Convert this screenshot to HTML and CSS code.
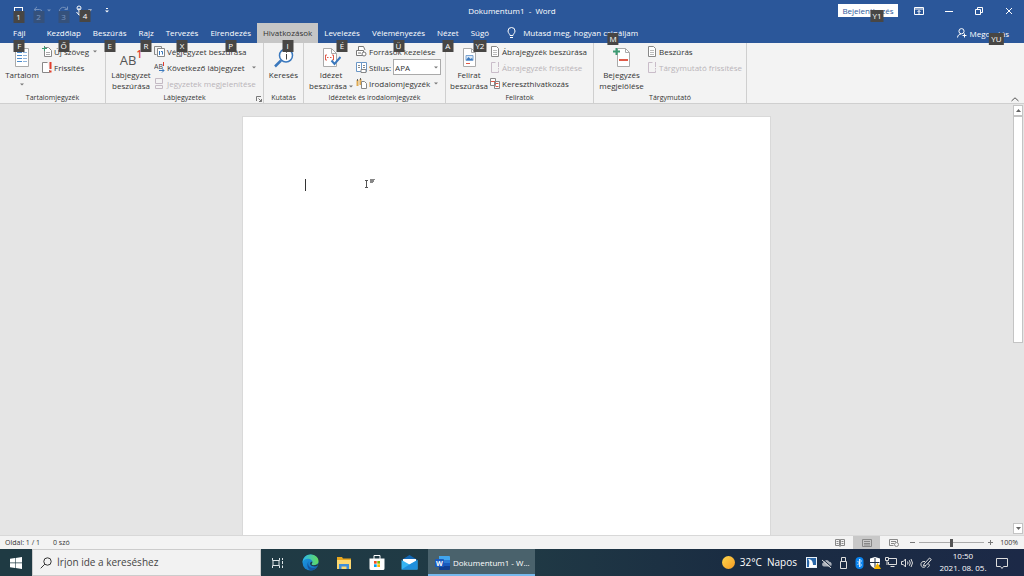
FILE: index.html
```
<!DOCTYPE html>
<html lang="hu">
    <head>
        <meta charset="utf-8">
        <title>Dokumentum1 - Word</title>
        <link rel="stylesheet" href="styles.css">
    </head>
    <body>
        <header class="titlebar">
            <div class="quick">
                <button class="quick-btn" aria-label="Mentés">
                    <svg width="11" height="10" viewBox="0 0 11 10" fill="none" stroke="#fff"><path d="M1.5 1v7.5h8V1M1 1.5h9"/></svg>
                    <span class="tip">1</span>
                </button>
                <button class="quick-btn dim" aria-label="Visszavonás">
                    <svg width="11" height="10" viewBox="0 0 11 10" fill="none" stroke="#fff"><path d="M4 .8L1.2 3.5 4 6.2M1.5 3.5h5a2.500 2.500 0 010 5"/></svg>
                    <span class="tip">2</span>
                </button>
                <svg class="caret light quick-caret dim" width="4" height="3" viewBox="0 0 4 3"><path d="M0 .5h4L2 2.500z"/></svg>
                <button class="quick-btn quick-redo dim" aria-label="Ismétlés">
                    <svg width="11" height="10" viewBox="0 0 11 10" fill="none" stroke="#fff"><path d="M9 3.500A4 4 0 109 7M9.500.5v3h-3"/></svg>
                    <span class="tip">3</span>
                </button>
                <button class="quick-btn quick-touch" aria-label="Érintőmód">
                    <svg width="11" height="12" viewBox="0 0 11 12" fill="none" stroke="#fff"><circle cx="5" cy="3" r="2"/><path d="M5 3v7M2.500 7l2.500 3 4 1V7L5 6"/></svg>
                    <span class="tip">4</span>
                </button>
                <svg class="caret light quick-caret" width="4" height="3" viewBox="0 0 4 3"><path d="M0 .5h4L2 2.500z"/></svg>
                <button class="quick-more" aria-label="Testreszabás">
                    <svg width="4" height="5" viewBox="0 0 4 5" fill="#fff"><path d="M1 0h2v1H1zM0 2.500h4L2 4.500z"/></svg>
                </button>
            </div>
            <h1 class="doc-title">Dokumentum1&nbsp; -&nbsp; Word</h1>
            <div class="window-tools">
                <button class="signin">Bejelentkezés<span class="tip">Y1</span></button>
                <button class="win-btn" aria-label="Menüszalag">
                    <svg width="10" height="8" viewBox="0 0 10 8" fill="none" stroke="#fff"><path d="M.5.5h9v7h-9zM.5 2h9M5 7V3.500M3.500 5L5 3.500 6.500 5"/></svg>
                </button>
                <button class="win-btn" aria-label="Kis méret">
                    <svg width="8" height="8" viewBox="0 0 8 8" stroke="#fff"><path d="M0 4.500h8"/></svg>
                </button>
                <button class="win-btn" aria-label="Előző méret">
                    <svg width="8" height="8" viewBox="0 0 8 8" fill="none" stroke="#fff"><path d="M.5 2.500h5v5h-5zM2.500 2V.5h5v5H6"/></svg>
                </button>
                <button class="win-btn" aria-label="Bezárás">
                    <svg width="8" height="8" viewBox="0 0 8 8" stroke="#fff"><path d="M1 1l6 6M7 1L1 7"/></svg>
                </button>
            </div>
        </header>

        <nav class="tabs">
            <button class="tab file">Fájl<span class="tip">F</span></button>
            <button class="tab">Kezdőlap<span class="tip">Ő</span></button>
            <button class="tab">Beszúrás<span class="tip">E</span></button>
            <button class="tab">Rajz<span class="tip">R</span></button>
            <button class="tab">Tervezés<span class="tip">X</span></button>
            <button class="tab">Elrendezés<span class="tip">P</span></button>
            <button class="tab active">Hivatkozások<span class="tip">I</span></button>
            <button class="tab">Levelezés<span class="tip">É</span></button>
            <button class="tab">Véleményezés<span class="tip">Ü</span></button>
            <button class="tab">Nézet<span class="tip">A</span></button>
            <button class="tab">Súgó<span class="tip">Y2</span></button>
            <button class="tell-me">
                <svg width="9" height="12" viewBox="0 0 9 12" fill="none" stroke="#fff"><path d="M3 8.500C3 7 1 6.200 1 4a3.500 3.500 0 017 0c0 2.200-2 3-2 4.500zM3 10.500h3"/></svg>
                Mutasd meg, hogyan csináljam
                <span class="tip">M</span>
            </button>
            <button class="share">
                <svg width="10" height="10" viewBox="0 0 10 10" fill="none" stroke="#fff"><circle cx="4.500" cy="3.200" r="2.600"/><path d="M.5 9.500C.8 7 2.500 6 4 6M7.500 5.500v4M5.500 7.500h4"/></svg>
                Megosztás
                <span class="tip">YU</span>
            </button>
        </nav>

        <section class="ribbon">
            <div class="group group-toc">
                <div class="group-body">
                    <button class="big">
                        <svg width="16" height="20" viewBox="0 0 16 20"><path d="M1.500.5h13v18h-13z" fill="#fff" stroke="#aaa"/><path d="M3 4.500h5M3 7.500h5M3 10.500h5M3 13.500h5" stroke="#4a8acb"/><path d="M9 4.500h4M9 7.500h4M9 10.500h4M9 13.500h4" stroke="#8fb4dc"/></svg>
                        <span>Tartalom</span>
                        <svg class="caret" width="4" height="3" viewBox="0 0 4 3"><path d="M0 .5h4L2 2.500z"/></svg>
                    </button>
                    <div class="smalls">
                        <button class="small">
                            <svg width="10" height="11" viewBox="0 0 10 11"><path d="M2.500 1.500h4l3 3v6h-7z" fill="#fff" stroke="#888"/><path d="M4 6.500h4M4 8.500h4" stroke="#aaa"/><path d="M0 2.500h5M2.500 0v5" stroke="#3c9a72"/></svg>
                            Új szöveg
                            <svg class="caret" width="4" height="3" viewBox="0 0 4 3"><path d="M0 .5h4L2 2.500z"/></svg>
                        </button>
                        <button class="small">
                            <svg width="10" height="11" viewBox="0 0 10 11"><path d="M5.500.5h-5v10h7V8" fill="#fff" stroke="#888"/><path d="M8.500 0v7M8.500 8.500v2" stroke="#e03e2d" stroke-width="2"/></svg>
                            Frissítés
                        </button>
                    </div>
                </div>
                <h2 class="group-name">Tartalomjegyzék</h2>
            </div>

            <div class="group group-notes">
                <div class="group-body">
                    <button class="big">
                        <span class="ab">AB<sup>1</sup></span>
                        <span>Lábjegyzet beszúrása</span>
                    </button>
                    <div class="smalls">
                        <button class="small">
                            <svg width="11" height="11" viewBox="0 0 11 11"><path d="M7.500 2.500v-2h-7v8h2" fill="none" stroke="#888"/><path d="M3.500 2.500h7v8h-7z" fill="#fff" stroke="#888"/><path d="M5.500 5v4M7 5.500h1.500v3" fill="none" stroke="#3a78bd"/></svg>
                            Végjegyzet beszúrása
                        </button>
                        <button class="small">
                            <svg class="ab-icon" width="11" height="11" viewBox="0 0 11 11"><text x="0" y="7">AB</text><path d="M9.500 0v4" stroke="#e03e2d"/><path d="M5 8.500h5M8 6.500l2 2-2 2" fill="none" stroke="#3a78bd"/></svg>
                            Következő lábjegyzet
                            <svg class="caret caret-gap" width="4" height="3" viewBox="0 0 4 3"><path d="M0 .5h4L2 2.500z"/></svg>
                        </button>
                        <button class="small" disabled>
                            <svg width="11" height="11" viewBox="0 0 11 11" fill="none" stroke="#c4bac4"><path d="M1.500.5h7v5h-7zM1.500 7.500h7v3h-7z"/></svg>
                            Jegyzetek megjelenítése
                        </button>
                    </div>
                </div>
                <h2 class="group-name">Lábjegyzetek</h2>
                <button class="launcher" aria-label="Lábjegyzet beállításai">
                    <svg width="6" height="6" viewBox="0 0 6 6" fill="none" stroke="#777"><path d="M.5 5V.5H5M2.500 2.500l3 3M5.500 3v2.500H3"/></svg>
                </button>
            </div>

            <div class="group group-search">
                <div class="group-body">
                    <button class="big">
                        <svg width="20" height="20" viewBox="0 0 20 20" fill="none"><circle cx="12" cy="7.500" r="6.500" fill="#fff" stroke="#3a78bd" stroke-width="1.500"/><path d="M7 12.500l-6 6" stroke="#3a78bd" stroke-width="2.500"/><path d="M12.500 6v5.500M12.500 3.500v1.200" stroke="#444"/></svg>
                        <span>Keresés</span>
                    </button>
                </div>
                <h2 class="group-name">Kutatás</h2>
            </div>

            <div class="group group-cite">
                <div class="group-body">
                    <button class="big">
                        <svg width="19" height="20" viewBox="0 0 19 20" fill="none"><path d="M1.500.5h8l5 5v13h-13z" fill="#fff" stroke="#aaa"/><path d="M9.500.5v5h5" stroke="#aaa"/><path d="M5 7H3.500v5H5M10 7h1.500v5H10M5 9.500h1.500M8 9.500h1.500" stroke="#e05a48"/><path d="M9.500 12.500l3 3.500 6-7" stroke="#3a78bd" stroke-width="2"/></svg>
                        <span>Idézet beszúrása <svg class="caret" width="4" height="3" viewBox="0 0 4 3"><path d="M0 .5h4L2 2.500z"/></svg></span>
                    </button>
                    <div class="smalls">
                        <button class="small">
                            <svg width="11" height="11" viewBox="0 0 11 11" fill="#fff" stroke="#777"><path d="M2.500 4V.5h5L9 4M.5 4.500h7v5h-7zM2 7h3"/><circle cx="8" cy="8" r="2"/></svg>
                            Források kezelése
                        </button>
                        <div class="small style-row">
                            <svg width="11" height="11" viewBox="0 0 11 11" fill="#fff"><path d="M.5.5h5v9h-5zM5.500.5h5v9h-5z" stroke="#6a96c6"/><path d="M2 3.500h2M2 5.500h2M7 3.500h2M7 5.500h2" stroke="#888"/><path d="M5 7.500h5v3H5z" stroke="#888"/></svg>
                            <label for="style">Stílus:</label>
                            <span class="select-wrap">
                                <select id="style"><option>APA</option></select>
                                <svg class="caret" width="4" height="3" viewBox="0 0 4 3"><path d="M0 .5h4L2 2.500z"/></svg>
                            </span>
                        </div>
                        <button class="small">
                            <svg width="11" height="11" viewBox="0 0 11 11" fill="#fff"><path d="M1.500 2v6M4.500 1v6" stroke="#e0aa50" stroke-width="2"/><path d="M1.500 1v2M4.500 0v2" stroke="#666"/><path d="M5.500 3.500h3l2 2v5h-5z" stroke="#888"/></svg>
                            Irodalomjegyzék
                            <svg class="caret" width="4" height="3" viewBox="0 0 4 3"><path d="M0 .5h4L2 2.500z"/></svg>
                        </button>
                    </div>
                </div>
                <h2 class="group-name">Idézetek és irodalomjegyzék</h2>
            </div>

            <div class="group group-captions">
                <div class="group-body">
                    <button class="big">
                        <svg width="15" height="20" viewBox="0 0 15 20" fill="none"><path d="M1.500.5h8l4 4v14h-12z" fill="#fff" stroke="#aaa"/><path d="M9.500.5v4h4" stroke="#aaa"/><path d="M4 7.500h7v5H4z" fill="#dce9f6" stroke="#7ba4d2"/><path d="M4 12l2.500-3 2 2 1.500-1 1 2z" fill="#3a78bd"/><path d="M4 15.500h4" stroke="#e05a48"/></svg>
                        <span>Felirat beszúrása</span>
                    </button>
                    <div class="smalls">
                        <button class="small">
                            <svg width="10" height="11" viewBox="0 0 10 11" fill="#fff"><path d="M1.500.5h5l2 2v8h-7z" stroke="#888"/><path d="M3 4.500h4M3 6.500h4M3 8.500h4" stroke="#bbb"/></svg>
                            Ábrajegyzék beszúrása
                        </button>
                        <button class="small" disabled>
                            <svg width="10" height="11" viewBox="0 0 10 11" fill="none" stroke="#c9bcc9"><path d="M5.500.5h-4v10h7v-2M8.500 0v5M8.500 6v1.500"/></svg>
                            Ábrajegyzék frissítése
                        </button>
                        <button class="small">
                            <svg width="10" height="11" viewBox="0 0 10 11" fill="#fff"><path d="M.5.5h5v7h-5zM4.500 3.500h5v7h-5z" stroke="#888"/><path d="M1 3.500h4M5.500 5.500h3M5.500 8.500h3" stroke="#e05a48"/></svg>
                            Kereszthivatkozás
                        </button>
                    </div>
                </div>
                <h2 class="group-name">Feliratok</h2>
            </div>

            <div class="group group-index">
                <div class="group-body">
                    <button class="big">
                        <svg width="18" height="20" viewBox="0 0 18 20" fill="none"><path d="M4.500.5h8l4 4v14h-12z" fill="#fff" stroke="#aaa"/><path d="M12.500.5v4h4" stroke="#aaa"/><path d="M0 3.500h7M3.500 0v7" stroke="#3c9a72" stroke-width="2"/><path d="M6 12h9" stroke="#e05a48" stroke-width="2"/></svg>
                        <span>Bejegyzés megjelölése</span>
                    </button>
                    <div class="smalls">
                        <button class="small">
                            <svg width="10" height="11" viewBox="0 0 10 11" fill="#fff"><path d="M1.500.5h5l2 2v8h-7z" stroke="#888"/><path d="M3 4.500h4M3 6.500h4M3 8.500h4" stroke="#bbb"/></svg>
                            Beszúrás
                        </button>
                        <button class="small" disabled>
                            <svg width="10" height="11" viewBox="0 0 10 11" fill="none" stroke="#c9bcc9"><path d="M5.500.5h-4v10h7v-2M8.500 0v5M8.500 6v1.500"/></svg>
                            Tárgymutató frissítése
                        </button>
                    </div>
                </div>
                <h2 class="group-name">Tárgymutató</h2>
            </div>

            <button class="collapse" aria-label="Menüszalag összecsukása">
                <svg width="8" height="5" viewBox="0 0 8 5" fill="none" stroke="#555"><path d="M.5 4L4 .8 7.500 4"/></svg>
            </button>
        </section>

        <main class="workspace">
            <div class="canvas">
                <div class="page">
                    <div class="text-caret"></div>
                    <svg class="pointer" width="12" height="12" viewBox="0 0 12 12" fill="none" stroke="#555"><path d="M1 2.500h3M2.500 2.500v7M1 9.500h3"/><path d="M6 1.500h5M6 3.500h4M6 2.500h4M6 4.500h3" stroke="#888"/></svg>
                </div>
            </div>
            <div class="scrollbar">
                <button class="scroll-btn" aria-label="Fel"><svg width="5" height="3" viewBox="0 0 5 3"><path d="M0 3h5L2.500 0z"/></svg></button>
                <div class="scroll-thumb"></div>
                <button class="scroll-btn scroll-down" aria-label="Le"><svg width="5" height="3" viewBox="0 0 5 3"><path d="M0 0h5L2.500 3z"/></svg></button>
            </div>
        </main>

        <footer class="status">
            <span>Oldal: 1 / 1</span>
            <span>0 szó</span>
            <div class="views">
                <button class="view" aria-label="Olvasási mód">
                    <svg width="10" height="8" viewBox="0 0 10 8" fill="none" stroke="#888"><path d="M.5.5h4v6h-4zM5.500.5h4v6h-4zM5 0v8M1.500 2.500h2M1.500 4.500h2M6.500 2.500h2M6.500 4.500h2"/></svg>
                </button>
                <button class="view current" aria-label="Nyomtatási elrendezés">
                    <svg width="10" height="8" viewBox="0 0 10 8" fill="none" stroke="#888"><path d="M.5.5h9v7h-9zM2 2.500h6M2 4.500h6M2 6h6"/></svg>
                </button>
                <button class="view" aria-label="Webes elrendezés">
                    <svg width="10" height="8" viewBox="0 0 10 8" fill="none" stroke="#888"><path d="M4.500 6.500h-4v-6h8v3M2 2.500h5M2 4.500h3"/><circle cx="7.500" cy="5.500" r="2"/></svg>
                </button>
            </div>
            <div class="zoom">
                <button class="zoom-btn" aria-label="Kicsinyítés"><svg width="5" height="5" viewBox="0 0 5 5" stroke="#777"><path d="M0 2.500h5"/></svg></button>
                <input type="range" class="zoom-range" aria-label="Nagyítás mértéke" min="0" max="200" value="100">
                <button class="zoom-btn" aria-label="Nagyítás"><svg width="5" height="5" viewBox="0 0 5 5" stroke="#777"><path d="M0 2.500h5M2.500 0v5"/></svg></button>
            </div>
            <span class="zoom-value">100%</span>
        </footer>

        <div class="taskbar">
            <button class="start" aria-label="Start">
                <svg width="12" height="12" viewBox="0 0 12 12" fill="#fff"><path d="M0 1.700L5 1v4.600H0zM5.600.9L12 0v5.600H5.600zM0 6.300h5V11l-5-.7zM5.600 6.300H12V12l-6.400-.9z"/></svg>
            </button>
            <label class="search">
                <svg width="12" height="12" viewBox="0 0 12 12" fill="none" stroke="#333"><circle cx="7.500" cy="4.500" r="3.700"/><path d="M4.800 7.200L.7 11.300"/></svg>
                <input type="text" placeholder="Írjon ide a kereséshez">
            </label>
            <button class="app" aria-label="Feladatnézet">
                <svg width="12" height="10" viewBox="0 0 12 10" fill="none" stroke="#dfe6e8"><path d="M.5 0v2.500h7V0M.5 10V7.500h7V10M1 3v4M7 3v4M10.500 0v2M10.500 3v3M10.500 7.500V10"/></svg>
            </button>
            <button class="app" aria-label="Microsoft Edge">
                <svg width="17" height="17" viewBox="0 0 17 17">
                    <defs>
                        <linearGradient id="edge-top" x2="1"><stop offset="0" stop-color="#2cb5ea"/><stop offset="1" stop-color="#63db5d"/></linearGradient>
                        <linearGradient id="edge-low" x2="1" y2="1"><stop offset="0" stop-color="#1b9de2"/><stop offset="1" stop-color="#1668bd"/></linearGradient>
                    </defs>
                    <circle cx="8.500" cy="8.500" r="8" fill="url(#edge-low)"/>
                    <path d="M.5 8.500C.8 3.800 4.300.5 8.700.5c4.500 0 7.800 3.200 7.800 6.500 0 3-2.300 4.300-4.600 4.300-1.600 0-2.400-.6-2.400-1.100 0-.6.9-.9.9-2.200C10.400 6.200 8.500 4.800 6 4.800 3.300 4.800 1 6.200.5 8.500z" fill="url(#edge-top)"/>
                    <path d="M7 7c-1.300 1.200-1.300 4.300.8 5.900 2 1.500 4.900 1.400 7.300.2-1.300 2-3.500 3.400-6 3.400C5.500 15.500 4 10 7 7z" fill="#14569f"/>
                    <path d="M10.300 7.500c.3 1.500-.9 2-.8 2.800.2.700 1.300 1 2.400 1 1.600 0 3.200-.6 4-1.700L15.500 12c-2 .8-6 .8-7.200-1.500-.6-1.300 0-2.600 2-3z" fill="#203944"/>
                </svg>
            </button>
            <button class="app" aria-label="Fájlkezelő">
                <svg width="16" height="14" viewBox="0 0 16 14"><path d="M1 1h5l1 1.500h8V13H1z" fill="#e9a820"/><path d="M1 4h14v9H1z" fill="#fcd870"/><path d="M3 8h10v5h-2.500v-2.500h-5V13H3z" fill="#3f8ed8"/></svg>
            </button>
            <button class="app" aria-label="Microsoft Store">
                <svg width="16" height="17" viewBox="0 0 16 17"><path d="M5 5V1.500h6V5" fill="none" stroke="#fff"/><path d="M.5 4.500h15v10a1.500 1.500 0 01-1.500 1.500H2a1.500 1.500 0 01-1.500-1.500z" fill="#fff"/><path d="M5 7h2.700v2.700H5z" fill="#f25022"/><path d="M8.300 7H11v2.700H8.300z" fill="#7fba00"/><path d="M5 10.300h2.700V13H5z" fill="#00a4ef"/><path d="M8.300 10.300H11V13H8.300z" fill="#ffb900"/></svg>
            </button>
            <button class="app" aria-label="Posta">
                <svg width="17" height="15" viewBox="0 0 17 15"><path d="M.5 5l8-5 8 5z" fill="#1267b4"/><path d="M2 4h13v6H2z" fill="#fff"/><path d="M.5 5l8 4.500 8-4.500v9.500H.5z" fill="#36b5f3"/><path d="M.5 14.500l8-5 8-4.500v9.500z" fill="#1f8fdc"/></svg>
            </button>
            <button class="running">
                <svg width="15" height="14" viewBox="0 0 15 14"><path d="M4 0h10a1 1 0 011 1v3H4z" fill="#41a5ee"/><path d="M4 4h11v3H4z" fill="#2b7cd3"/><path d="M4 7h11v3H4z" fill="#185abd"/><path d="M4 10h11v3a1 1 0 01-1 1H4z" fill="#103f91"/><rect y="3" width="9" height="8" rx="1" fill="#185abd"/><text class="word-letter" x="4.500" y="9.500" text-anchor="middle">W</text></svg>
                Dokumentum1 - W...
            </button>
            <div class="tray">
                <button class="weather">
                    <span class="sun"></span>32°C&nbsp; Napos
                </button>
                <button class="tray-btn" aria-label="Wireshark"><svg width="11" height="11" viewBox="0 0 11 11"><path d="M0 0h11v11H0z" fill="#e8f0f8"/><path d="M1 1h9v9H1z" fill="#2a67a8"/><path d="M2 2c3 0 5 2 5 6h3v2H3C3 7 4 4 2 2z" fill="#fff"/></svg></button>
                <button class="tray-btn" aria-label="OneDrive"><svg width="12" height="10" viewBox="0 0 12 10"><path d="M3 8.500a2.200 2.200 0 01-.3-4.300 3 3 0 015.500-.5 2.500 2.500 0 011 4.800z" fill="#a9afb9"/><path d="M1.500 1l9 8" stroke="#1b2c43"/><path d="M1 2l9 8" stroke="#ddd"/></svg></button>
                <button class="tray-btn" aria-label="USB"><svg width="9" height="12" viewBox="0 0 9 12" fill="none" stroke="#ddd"><path d="M2.500 4V.5h4V4M1.500 4.500h6v7h-6z"/></svg></button>
                <button class="tray-btn" aria-label="Bluetooth"><svg width="9" height="12" viewBox="0 0 9 12"><rect x=".5" width="8" height="12" rx="4" fill="#0a84f0"/><path d="M2.500 4l4 4-2 2V2l2 2-4 4" fill="none" stroke="#fff" stroke-width=".8"/></svg></button>
                <button class="tray-btn" aria-label="Biztonság"><svg width="11" height="12" viewBox="0 0 11 12"><path d="M5 0l5 1.500V6c0 2.500-2 4.500-5 5.500C2 10.500 0 8.500 0 6V1.500z" fill="#fff"/><path d="M5 1v9.500M0 5.500h9.500" stroke="#1b2c43"/><path d="M7.500 6l3.500 6H4z" fill="#f5b400"/></svg></button>
                <button class="tray-btn" aria-label="Hálózat"><svg width="12" height="11" viewBox="0 0 12 11" fill="none" stroke="#ddd"><path d="M4 1.500h7.500v6H3.500V5M5.500 9.500h4M.5.500h3v3h-3zM2 4v4"/></svg></button>
                <button class="tray-btn" aria-label="Hangerő"><svg width="12" height="10" viewBox="0 0 12 10" fill="none" stroke="#ddd"><path d="M.5 3.500h1.800L4.500 1v8L2.300 6.500H.5zM6.500 3.500q1 1.500 0 3M8.300 2.200q2 2.800 0 5.600M10 1q3 4 0 8"/></svg></button>
                <button class="tray-btn tray-pen" aria-label="Toll"><svg width="12" height="12" viewBox="0 0 12 12" fill="none" stroke="#ddd"><path d="M4 7l5.500-6 1.800 1.500L6 8.500l-2.500.5zM5 4.500C2 4 .5 6 1 8c.5 2.500 3 3 4.500 1.500M8 7c2 0 2 2-.5 3.500"/></svg></button>
                <div class="clock"><time>10:50</time><time>2021. 08. 05.</time></div>
                <button class="notify" aria-label="Értesítések"><svg width="12" height="12" viewBox="0 0 12 12" fill="none" stroke="#ddd"><path d="M.5 1.500h11v8h-4l-1.500 2-1.500-2h-4z"/></svg></button>
            </div>
        </div>
    </body>
</html>
```
FILE: styles.css
```
:root {
    --blue: #2b579a;
    --ribbon: #f3f3f3;
    --line: #cfcfcf;
    --text: #333;
    --tip: #484644;
}

* {
    box-sizing: border-box;
}

body {
    margin: 0;
    height: 100vh;
    display: flex;
    flex-direction: column;
    overflow: hidden;
    font-family: 'Open Sans', 'Noto Sans', sans-serif;
    font-size: 8px;
    line-height: 11px;
    color: var(--text);
}

button,
input,
select {
    font: inherit;
    color: inherit;
    background: none;
    border: none;
    border-radius: 0;
    padding: 0;
    margin: 0;
}

svg {
    flex: none;
    display: block;
}

h1,
h2 {
    margin: 0;
    font-size: inherit;
    font-weight: 400;
}

.caret {
    fill: #777;
}

.light {
    fill: #fff;
}

/* Access key badges */
.tip {
    position: absolute;
    left: 50%;
    top: 17px;
    transform: translateX(-50%);
    z-index: 2;
    min-width: 11px;
    height: 12px;
    padding: 0 2px;
    background: var(--tip);
    color: #fff;
    line-height: 11px;
    text-align: center;
}

/* Title bar */
.titlebar {
    display: grid;
    grid-template-columns: 1fr auto 1fr;
    align-items: center;
    height: 23px;
    padding-bottom: 2px;
    background: var(--blue);
    color: #fff;
}

.quick {
    display: flex;
    align-items: center;
    padding-left: 13px;
}

.quick-btn {
    position: relative;
    width: 11px;
    margin-right: 9px;
}

.quick-btn .tip {
    top: 5px;
}

.quick-caret {
    margin: 0 7px 0 -6px;
}

.quick-redo {
    margin-right: 5px;
}

.quick-touch .tip {
    left: 11px;
}

.quick-more {
    margin-left: 6px;
}

.dim {
    opacity: 0.35;
}

.window-tools {
    display: flex;
    align-items: center;
    justify-content: flex-end;
}

.signin {
    position: relative;
    width: 60px;
    height: 13px;
    margin-right: 6px;
    background: #fff;
    color: var(--blue);
}

.signin .tip {
    left: 39px;
    top: 6px;
}

.win-btn {
    width: 30px;
    height: 20px;
    display: flex;
    align-items: center;
    justify-content: center;
}

/* Tabs */
.tabs {
    display: flex;
    height: 20px;
    padding: 0 15px 0 7px;
    background: var(--blue);
    color: #fff;
}

.tab {
    position: relative;
    padding: 0 6px 1px;
}

.file {
    margin-right: 9px;
}

.tab.active {
    background: #c6c6c6;
    color: var(--text);
}

.tell-me,
.share {
    position: relative;
    display: flex;
    align-items: center;
    gap: 7px;
}

.tell-me {
    margin-left: 12px;
    padding-bottom: 1px;
}

.tell-me .tip {
    left: 106px;
    top: 10px;
}

.share {
    margin-left: auto;
    gap: 2px;
}

.share .tip {
    left: 39px;
    top: 10px;
}

/* Ribbon */
.ribbon {
    display: flex;
    height: 61px;
    background: var(--ribbon);
    border-bottom: 1px solid var(--line);
}

.group {
    position: relative;
    display: flex;
    flex-direction: column;
    padding: 0 5px;
    border-right: 1px solid var(--line);
}

.group-toc {
    width: 106px;
}

.group-notes {
    width: 158px;
}

.group-search {
    width: 40px;
}

.group-cite {
    width: 142px;
}

.group-captions {
    width: 148px;
}

.group-index {
    width: 153px;
}

.group-body {
    display: flex;
    align-items: flex-start;
    gap: 3px;
    flex: 1;
    min-height: 0;
}

.big {
    width: 34px;
    padding-top: 5px;
    display: flex;
    flex-direction: column;
    align-items: center;
    flex: none;
}

.big > svg:first-child,
.ab {
    height: 20px;
    margin-bottom: 1px;
}

.big .caret {
    margin-top: 3px;
}

.big span .caret {
    display: inline-block;
    vertical-align: middle;
    margin: 0;
}

.group-notes .big {
    width: 40px;
}

.group-search .big {
    width: 100%;
}

.group-cite .big {
    width: 44px;
}

.group-captions .big {
    width: 36px;
}

.group-index .big {
    width: 45px;
}

.ab {
    font-size: 13px;
    line-height: 24px;
    color: #555;
}

.ab sup {
    font-size: 10px;
    font-weight: 600;
    line-height: 0;
    vertical-align: 7px;
    color: #e03e2d;
}

.ab-icon text {
    font-size: 7px;
    fill: #444;
}

.smalls {
    flex: 1;
}

.small {
    display: flex;
    align-items: center;
    gap: 2px;
    height: 16px;
    white-space: nowrap;
}

.small:disabled {
    color: #b9b4b9;
}

.small .caret {
    margin-left: 2px;
}

.small .caret-gap {
    margin-left: 5px;
}

.select-wrap {
    position: relative;
    flex: none;
}

.select-wrap select {
    display: block;
    width: 48px;
    height: 16px;
    padding: 0 1px;
    appearance: none;
    background: #fff;
    border: 1px solid #aaa;
}

.select-wrap .caret {
    position: absolute;
    right: 3px;
    top: 7px;
}

.group-name {
    font-size: 7px;
    line-height: 10px;
    text-align: center;
}

.launcher {
    position: absolute;
    right: 1px;
    bottom: 1px;
}

.collapse {
    align-self: flex-end;
    margin: 0 5px 1px auto;
}

/* Document area */
.workspace {
    flex: 1;
    min-height: 0;
    display: flex;
    background: #e5e5e5;
}

.canvas {
    flex: 1;
    display: flex;
    justify-content: center;
    padding-top: 12px;
}

.page {
    position: relative;
    width: 529px;
    padding: 62px;
    background: #fff;
    border: 1px solid #d9d9d9;
    border-bottom: none;
}

.text-caret {
    width: 1px;
    height: 12px;
    background: #333;
}

.pointer {
    position: absolute;
    left: 121px;
    top: 61px;
}

.scrollbar {
    display: flex;
    flex-direction: column;
    width: 11px;
    padding: 1px 1px 1px 0;
}

.scroll-btn {
    display: flex;
    align-items: center;
    justify-content: center;
    height: 11px;
    background: #fff;
    border: 1px solid #c4c4c4;
    fill: #666;
}

.scroll-thumb {
    height: 53%;
    background: #fff;
    border: 1px solid #c4c4c4;
}

.scroll-down {
    margin-top: auto;
}

/* Status bar */
.status {
    display: flex;
    align-items: center;
    gap: 13px;
    height: 14px;
    padding: 0 6px 0 5px;
    background: var(--ribbon);
    border-top: 1px solid #d8d8d8;
    font-size: 7px;
}

.views {
    display: flex;
    height: 100%;
    margin-left: auto;
}

.view {
    display: flex;
    align-items: center;
    justify-content: center;
    width: 27px;
}

.view.current {
    background: #c8c8c8;
}

.zoom {
    display: flex;
    align-items: center;
    gap: 4px;
    margin-left: -10px;
}

.zoom-range {
    width: 65px;
    height: 9px;
    appearance: none;
    background: linear-gradient(#aaa, #aaa) center / 100% 1px no-repeat;
}

.zoom-range::-webkit-slider-thumb {
    appearance: none;
    width: 3px;
    height: 8px;
    background: #555;
}

.zoom-value {
    margin-left: -6px;
}

/* Taskbar */
.taskbar {
    display: flex;
    height: 27px;
    background: linear-gradient(90deg, #1f3a43, #203a45 50%, #1a2c42 72%, #1c2947);
    color: #fff;
}

.start {
    width: 32px;
    display: flex;
    align-items: center;
    justify-content: center;
}

.search {
    display: flex;
    align-items: center;
    gap: 5px;
    width: 229px;
    padding-left: 7px;
    background: #f2f2f2;
    border: 1px solid #ccc;
}

.search input {
    flex: 1;
    font-size: 10px;
    color: var(--text);
}

.search input::placeholder {
    color: #444;
    opacity: 1;
}

.app {
    display: flex;
    align-items: center;
    justify-content: center;
    width: 33px;
}

.running {
    display: flex;
    align-items: center;
    gap: 3px;
    width: 107px;
    margin-left: 2px;
    padding: 2px 0 0 7px;
    background: #4a626c;
    border-bottom: 2px solid #76b9ed;
    white-space: nowrap;
}

.word-letter {
    font-size: 7px;
    font-weight: 700;
    fill: #fff;
}

.tray {
    display: flex;
    align-items: center;
    margin-left: auto;
}

.weather {
    display: flex;
    align-items: center;
    margin-right: 6px;
    font-size: 10px;
}

.sun {
    width: 13px;
    height: 13px;
    margin-right: 5px;
    border-radius: 50%;
    background: linear-gradient(135deg, #ffd84d, #f59a23);
}

.tray-btn {
    display: flex;
    justify-content: center;
    width: 16px;
}

.tray-pen {
    width: 22px;
}

.clock {
    display: flex;
    flex-direction: column;
    align-items: center;
    width: 52px;
    padding-bottom: 2px;
    line-height: 12px;
}

.notify {
    display: flex;
    justify-content: center;
    width: 26px;
    margin-right: 9px;
}
```
